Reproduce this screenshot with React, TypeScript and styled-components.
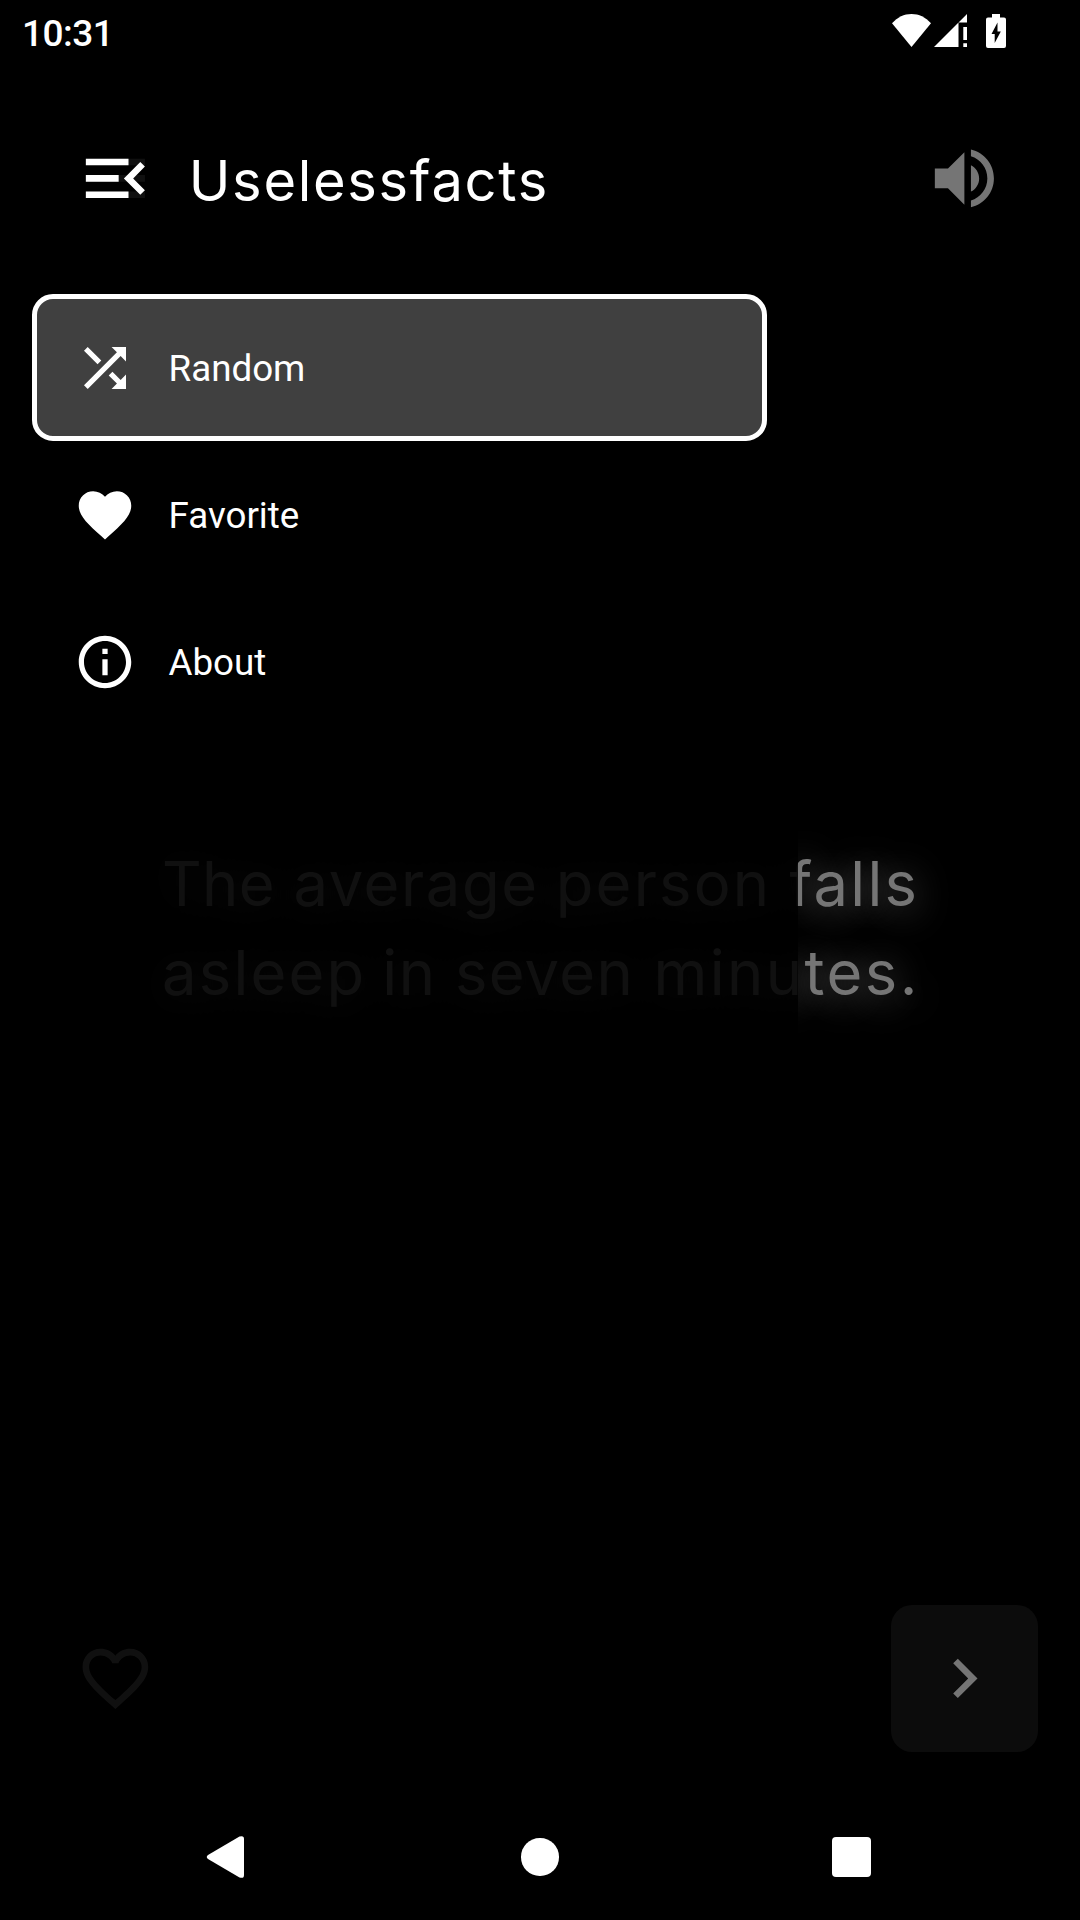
import React from "react";
import styled, { createGlobalStyle } from "styled-components";

const GlobalStyle = createGlobalStyle`
  body { margin: 0; background: #000; }
`;

const Screen = styled.div`
  position: relative;
  width: 1080px;
  height: 1920px;
  overflow: hidden;
  display: flex;
  flex-direction: column;
  background: #000;
  color: #fff;
  font-family: Roboto, "Liberation Sans", sans-serif;
`;

const StatusBar = styled.header`
  height: 63px;
  flex: none;
  display: flex;
  justify-content: space-between;
  padding: 0 74px 0 22px;
`;

const Clock = styled.time`
  font-size: 37px;
  font-weight: 500;
  line-height: 44px;
  padding-top: 12px;
  letter-spacing: -0.5px;
`;

const StatusIcons = styled.div`
  display: flex;
  align-items: flex-start;
  padding-top: 14px;
`;

const StatusGlyph = styled.svg<{ $gap?: number }>`
  display: block;
  margin-left: ${(p) => p.$gap ?? 0}px;
  fill: #fff;
`;

const Icon = styled.svg<{ $size: number; $color?: string }>`
  display: block;
  flex: none;
  width: ${(p) => p.$size}px;
  height: ${(p) => p.$size}px;
  fill: ${(p) => p.$color ?? "#fff"};
`;

const Page = styled.main`
  flex: 1;
  display: flex;
  flex-direction: column;
`;

const TopBar = styled.div`
  height: 231px;
  flex: none;
  box-sizing: border-box;
  display: flex;
  align-items: center;
  justify-content: space-between;
  padding: 0 76px;
`;

const FactArea = styled.section`
  flex: 1;
  padding: 545px 0 0 162px;
`;

const Fact = styled.p`
  margin: 0;
  color: #757575;
  font-family: Inter, "Liberation Sans", sans-serif;
  font-size: 61.5px;
  line-height: 89px;
  text-shadow: 0 4px 36px rgba(255, 255, 255, 0.38);
`;

const FactLine = styled.span`
  display: block;
  white-space: nowrap;
`;

const Word = styled.span<{ $track: number; $gap?: number }>`
  letter-spacing: ${(p) => p.$track}px;
  margin-left: ${(p) => p.$gap ?? 0}px;
`;

const Actions = styled.div`
  flex: none;
  display: flex;
  align-items: center;
  justify-content: space-between;
  padding: 0 42px 42px 76px;
`;

const NextButton = styled.button`
  width: 147px;
  height: 147px;
  padding: 0;
  border: 0;
  border-radius: 21px;
  background: #0c0c0c;
  display: grid;
  place-items: center;
`;

const Drawer = styled.aside`
  position: absolute;
  top: 63px;
  left: 0;
  width: 798px;
  height: 1731px;
  background: rgba(0, 0, 0, 0.86);
`;

const DrawerHeader = styled.div`
  height: 231px;
  box-sizing: border-box;
  display: flex;
  align-items: center;
  padding-left: 76px;
  gap: 34px;
`;

const Title = styled.h1`
  margin: 0;
  font-family: Inter, "Liberation Sans", sans-serif;
  font-size: 56px;
  font-weight: 400;
  line-height: 64px;
  letter-spacing: 1.7px;
  padding-top: 5px;
`;

const Menu = styled.nav`
  padding: 0 31px 0 32px;
`;

const MenuItem = styled.a<{ $active?: boolean }>`
  height: 147px;
  box-sizing: border-box;
  display: flex;
  align-items: center;
  gap: 31.5px;
  padding-left: 36px;
  border: 5px solid ${(p) => (p.$active ? "#fff" : "transparent")};
  border-radius: 21px;
  background: ${(p) => (p.$active ? "#404040" : "transparent")};
  font-size: 36.75px;
`;

const MenuLabel = styled.span`
  padding-top: 2px;
`;

const SystemNav = styled.footer`
  height: 126px;
  flex: none;
  display: flex;
  align-items: center;
  justify-content: space-between;
  padding: 0 209px 0 206px;
`;

const HomeButton = styled.span`
  width: 37.5px;
  height: 37.5px;
  border-radius: 50%;
  background: #fff;
  margin-left: 0.5px;
`;

const RecentsButton = styled.span`
  width: 39.5px;
  height: 39.5px;
  border-radius: 4px;
  background: #fff;
`;

const paths = {
  menu: "M3 18h18v-2H3v2zm0-5h18v-2H3v2zm0-7v2h18V6H3z",
  menuOpen:
    "M3 18h13v-2H3v2zM3 6v2h13V6H3zm0 7h10v-2H3v2zm18 2.59L17.42 12 21 8.41 19.59 7l-5 5 5 5L21 15.59z",
  volume:
    "M3 9v6h4l5 5V4L7 9H3zm13.5 3c0-1.77-1.02-3.29-2.5-4.03v8.05c1.48-.73 2.5-2.25 2.5-4.02zM14 3.23v2.06c2.89.86 5 3.54 5 6.71s-2.11 5.85-5 6.71v2.06c4.01-.91 7-4.49 7-8.77s-2.99-7.86-7-8.77z",
  shuffle:
    "M10.59 9.17L5.41 4 4 5.41l5.17 5.17 1.42-1.41zM14.5 4l2.04 2.04L4 18.59 5.41 20 17.96 7.46 20 9.5V4h-5.5zm.33 9.41l-1.41 1.41 3.13 3.13L14.5 20H20v-5.5l-2.04 2.04-3.13-3.13z",
  heart:
    "M12 21.35l-1.45-1.32C5.4 15.36 2 12.28 2 8.5 2 5.42 4.42 3 7.5 3c1.74 0 3.41.81 4.5 2.09C13.09 3.81 14.76 3 16.5 3 19.58 3 22 5.42 22 8.5c0 3.78-3.4 6.86-8.55 11.54L12 21.35z",
  heartOutline:
    "M16.5 3c-1.74 0-3.41.81-4.5 2.09C10.91 3.81 9.24 3 7.5 3 4.42 3 2 5.42 2 8.5c0 3.78 3.4 6.86 8.55 11.54L12 21.35l1.45-1.32C18.6 15.36 22 12.28 22 8.5 22 5.42 19.58 3 16.5 3zm-4.4 15.55l-.1.1-.1-.1C7.14 14.24 4 11.39 4 8.5 4 6.5 5.5 5 7.5 5c1.54 0 3.04.99 3.57 2.36h1.87C13.46 5.99 14.96 5 16.5 5c2 0 3.5 1.5 3.5 3.5 0 2.89-3.14 5.74-7.9 10.05z",
  info: "M11 7h2v2h-2zm0 4h2v6h-2zm1-9C6.48 2 2 6.48 2 12s4.48 10 10 10 10-4.48 10-10S17.52 2 12 2zm0 18c-4.41 0-8-3.59-8-8s3.59-8 8-8 8 3.59 8 8-3.59 8-8 8z",
  chevron: "M10 6L8.59 7.41 13.17 12l-4.58 4.59L10 18l6-6z",
};

interface GlyphProps {
  name: keyof typeof paths;
  size: number;
  color?: string;
  box?: string;
}

function Glyph({ name, size, color, box = "0 0 24 24" }: GlyphProps) {
  return (
    <Icon viewBox={box} $size={size} $color={color} aria-hidden="true">
      <path d={paths[name]} />
    </Icon>
  );
}

const menuItems: { label: string; icon: keyof typeof paths; active?: boolean }[] = [
  { label: "Random", icon: "shuffle", active: true },
  { label: "Favorite", icon: "heart" },
  { label: "About", icon: "info" },
];

const factLines: { text: string; track: number; gap?: number }[][] = [
  [
    { text: "The", track: 0.4 },
    { text: "average", track: 1.6, gap: 1 },
    { text: "person", track: 2.2, gap: -0.3 },
    { text: "falls", track: 2.2, gap: 1 },
  ],
  [
    { text: "asleep", track: 2.2 },
    { text: "in", track: 1.6, gap: -1.5 },
    { text: "seven", track: 1.3, gap: 0.9 },
    { text: "minutes.", track: 2.4, gap: 2.2 },
  ],
];

export default function App() {
  return (
    <>
      <GlobalStyle />
      <Screen>
        <StatusBar>
          <Clock>10:31</Clock>
          <StatusIcons>
            <StatusGlyph width="39" height="33" viewBox="0 0 39 33">
              <path d="M0 9.3C5.5 3.2 12 0 19.5 0S33.5 3.2 39 9.3L19.5 33z" />
            </StatusGlyph>
            <StatusGlyph $gap={3} width="33" height="33" viewBox="0 0 33 33">
              <path d="M0 33L24.5 8.500V33zM24.5 8.500L33 0V8.500zM29.300 13H33V26H29.300zM29.300 29.300H33V33H29.300z" />
            </StatusGlyph>
            <StatusGlyph $gap={19} width="20" height="34" viewBox="0 0 20 34">
              <path
                fillRule="evenodd"
                d="M6 0h8v3.500h4a2 2 0 0 1 2 2V32a2 2 0 0 1-2 2H2a2 2 0 0 1-2-2V5.500a2 2 0 0 1 2-2h4zM11.500 8.500L5.500 20h3.200v9L14.800 17.500h-3.300z"
              />
            </StatusGlyph>
          </StatusIcons>
        </StatusBar>

        <Page>
          <TopBar>
            <Glyph name="menu" size={78.75} color="#757575" />
            <Glyph name="volume" size={78.75} color="#757575" />
          </TopBar>
          <FactArea>
            <Fact>
              {factLines.map((line, i) => (
                <FactLine key={i}>
                  {line.map((word, j) => (
                    <React.Fragment key={j}>
                      {j > 0 && " "}
                      <Word $track={word.track} $gap={word.gap}>
                        {word.text}
                      </Word>
                    </React.Fragment>
                  ))}
                </FactLine>
              ))}
            </Fact>
          </FactArea>
          <Actions>
            <Glyph name="heartOutline" size={78.75} color="#757575" />
            <NextButton aria-label="Next fact">
              <Glyph name="chevron" size={78.75} color="#757575" />
            </NextButton>
          </Actions>
        </Page>

        <Drawer>
          <DrawerHeader>
            <Glyph name="menuOpen" size={78.75} />
            <Title>Uselessfacts</Title>
          </DrawerHeader>
          <Menu>
            {menuItems.map((item) => (
              <MenuItem key={item.label} $active={item.active}>
                <Glyph name={item.icon} size={64} box="-0.19 -0.19 24.38 24.38" />
                <MenuLabel>{item.label}</MenuLabel>
              </MenuItem>
            ))}
          </Menu>
        </Drawer>

        <SystemNav>
          <Icon viewBox="0 0 42 42" $size={42} aria-hidden="true">
            <path d="M2 19L33.500 .6Q38 -1 38 3V39Q38 43 33.500 41.400L2 23Q-.5 21 2 19z" />
          </Icon>
          <HomeButton />
          <RecentsButton />
        </SystemNav>
      </Screen>
    </>
  );
}
